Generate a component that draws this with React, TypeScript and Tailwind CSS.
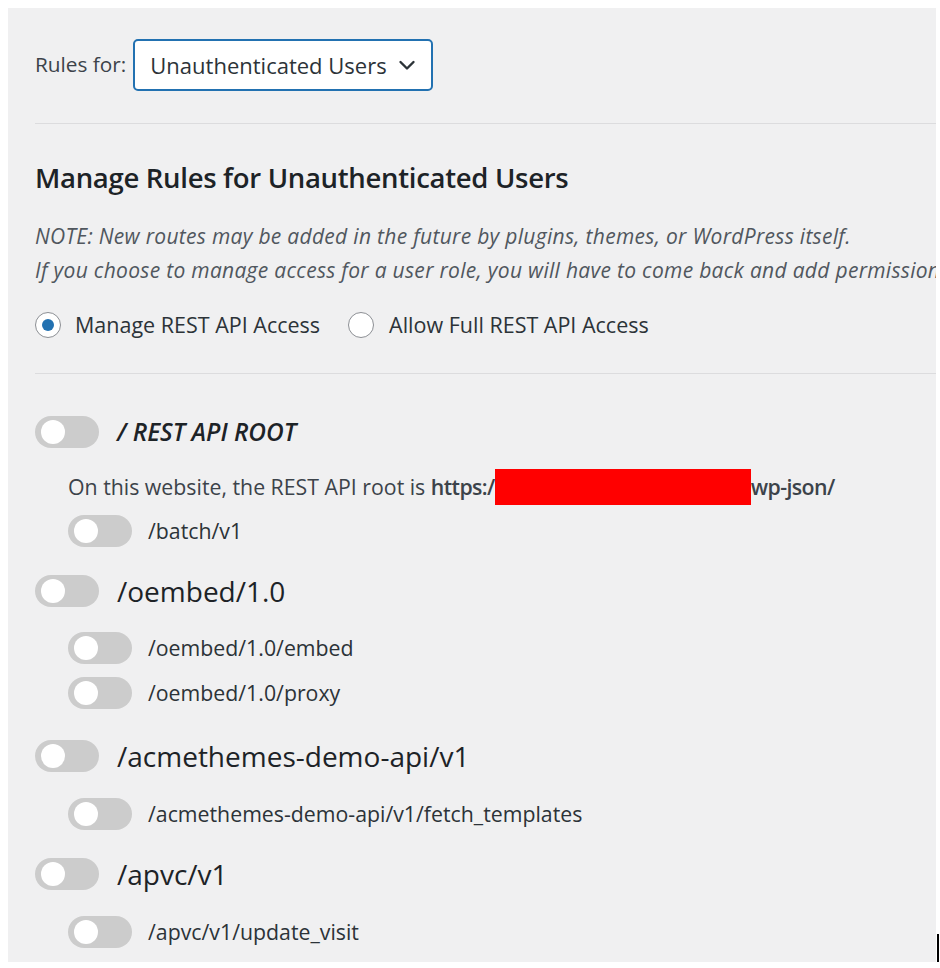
import React from "react";

const font = { fontFamily: '"Open Sans", "Noto Sans", sans-serif' };

function Toggle() {
  return (
    <span className="relative inline-block w-[64px] h-[32px] rounded-full bg-[#cccccc] shrink-0">
      <span className="absolute left-[6px] top-[4px] w-[24px] h-[24px] rounded-full bg-white" />
    </span>
  );
}

function Route({ label, sub, mt }: { label: string; sub?: boolean; mt: string }) {
  if (sub) {
    return (
      <div className={`flex items-center h-[30px] pl-[33px] ${mt}`}>
        <Toggle />
        <span className="ml-[16px] text-[21.3px] text-[#2c3338]">{label}</span>
      </div>
    );
  }
  return (
    <div className={`flex items-center h-[32px] ${mt}`}>
      <Toggle />
      <span className="ml-[18px] text-[28px] text-[#1d2327]">{label}</span>
    </div>
  );
}

export default function App() {
  return (
    <div className="w-[940px] h-[968px] bg-white flex pt-[8px] pl-[8px]" style={font}>
      <div className="w-[928px] h-[954px] bg-[#f0f0f1] overflow-hidden pl-[27px]">
        <div className="flex items-center h-[52px] mt-[31px]">
          <span className="text-[20.8px] text-[#3c434a] mr-[7px]">Rules for:</span>
          <div className="flex items-center w-[300px] h-[52px] border-2 border-[#2271b1] rounded-[5px] bg-white pl-[15px] pr-[14px]">
            <span className="text-[22px] text-[#2c3338] flex-1">Unauthenticated Users</span>
            <svg width="20" height="20" viewBox="0 0 20 20" fill="none">
              <path d="M3.5 7l6.5 6.5L16.5 7" stroke="#2c3338" strokeWidth="2.4" strokeLinecap="round" strokeLinejoin="round" />
            </svg>
          </div>
        </div>
        <div className="h-px bg-[#dcdcde] mt-[32px]" />
        <h1 className="h-[36px] flex items-center mt-[36px] text-[27.5px] font-semibold text-[#1d2327] tracking-[-0.3px]">
          Manage Rules for Unauthenticated Users
        </h1>
        <div className="mt-[23px] italic text-[21px] text-[#50575e] leading-[34px] whitespace-nowrap tracking-[0.3px]">
          <div>NOTE: New routes may be added in the future by plugins, themes, or WordPress itself.</div>
          <div>If you choose to manage access for a user role, you will have to come back and add permission</div>
        </div>
        <div className="flex items-center h-[30px] mt-[23px] text-[21.5px] text-[#2c3338]">
          <span className="w-[26px] h-[26px] rounded-full border border-[#8c8f94] bg-white flex items-center justify-center">
            <span className="w-[12px] h-[12px] rounded-full bg-[#2271b1]" />
          </span>
          <span className="ml-[14px]">Manage REST API Access</span>
          <span className="ml-[28px] w-[26px] h-[26px] rounded-full border border-[#8c8f94] bg-white" />
          <span className="ml-[15px]">Allow Full REST API Access</span>
        </div>
        <div className="h-px bg-[#dcdcde] mt-[33px]" />

        <div className="flex items-center h-[32px] mt-[42px]">
          <Toggle />
          <span className="ml-[18px] text-[24.4px] italic font-semibold text-[#1d2327]">/ REST API ROOT</span>
        </div>
        <div className="flex items-center h-[36px] mt-[21px] pl-[33px] text-[21.3px] text-[#3c434a] whitespace-nowrap">
          <span>On this website, the REST API root is&nbsp;</span>
          <span className="font-semibold tracking-[-0.6px]">https:/</span>
          <span className="w-[256px] h-[36px] bg-[#ff0000]" />
          <span className="font-semibold tracking-[-0.6px]">wp-json/</span>
        </div>
        <Route sub label="/batch/v1" mt="mt-[11px]" />
        <Route label="/oembed/1.0" mt="mt-[29px]" />
        <Route sub label="/oembed/1.0/embed" mt="mt-[26px]" />
        <Route sub label="/oembed/1.0/proxy" mt="mt-[15px]" />
        <Route label="/acmethemes-demo-api/v1" mt="mt-[32px]" />
        <Route sub label="/acmethemes-demo-api/v1/fetch_templates" mt="mt-[27px]" />
        <Route label="/apvc/v1" mt="mt-[29px]" />
        <Route sub label="/apvc/v1/update_visit" mt="mt-[27px]" />
      </div>
      <div className="flex flex-col justify-end h-[954px] ml-[1px]">
        <div className="w-[2px] h-[28px] bg-black" />
      </div>
    </div>
  );
}
